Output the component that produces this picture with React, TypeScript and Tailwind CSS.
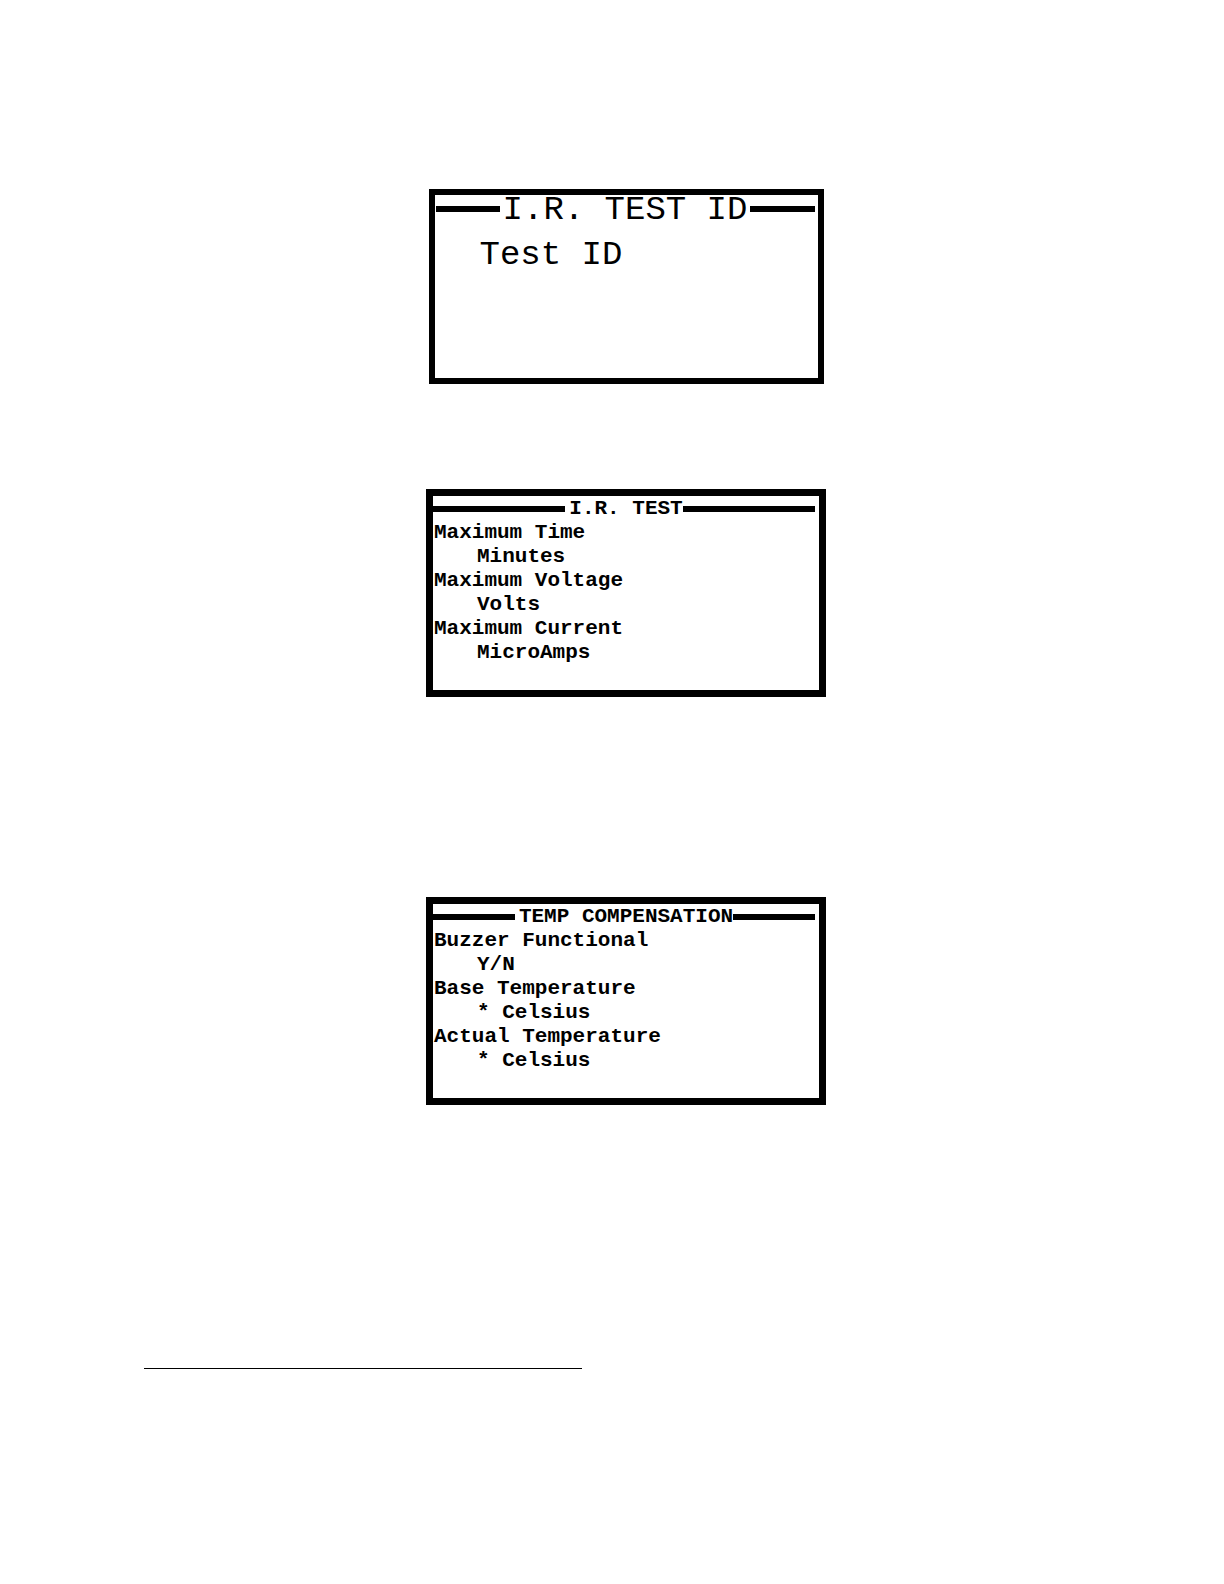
import type { ReactNode } from "react";

interface ScreenProps {
  title: string;
  lines: { text: string; indent?: boolean }[];
}

function TitleRow({ children }: { children: ReactNode }) {
  return (
    <div className="flex items-center">
      <span className="h-[6px] flex-1 bg-black" />
      {children}
      <span className="h-[6px] flex-1 bg-black" />
    </div>
  );
}

function Screen({ title, lines }: ScreenProps) {
  return (
    <section className="w-full max-w-[400px] border-[7px] border-black bg-white pr-1 pb-[25px] text-[21px] leading-[24px] font-bold">
      <TitleRow>
        <h2 className="pt-px pl-1 whitespace-pre">{title}</h2>
      </TitleRow>
      {lines.map((line, i) => (
        <p key={i} className={line.indent ? "pl-11 whitespace-pre" : "pl-px whitespace-pre"}>
          {line.text}
        </p>
      ))}
    </section>
  );
}

export default function App() {
  return (
    <main className="min-h-screen bg-white pt-[189px] pr-[116px] pb-24 pl-36 font-['Liberation_Mono',monospace] text-black">
      <div className="flex flex-col items-center">
        <section className="w-full max-w-[395px] border-[6px] border-black bg-white pr-[3px] pb-[111px] pl-px text-[34px] leading-[24px]">
          <TitleRow>
            <h2 className="px-[3px] pt-[3px] whitespace-pre">I.R. TEST ID</h2>
          </TitleRow>
          <p className="mt-[21px] pl-11 whitespace-pre">Test ID</p>
        </section>

        <div className="mt-[105px] flex w-full justify-center">
          <Screen
            title="I.R. TEST"
            lines={[
              { text: "Maximum Time" },
              { text: "Minutes", indent: true },
              { text: "Maximum Voltage" },
              { text: "Volts", indent: true },
              { text: "Maximum Current" },
              { text: "MicroAmps", indent: true },
            ]}
          />
        </div>

        <div className="mt-[200px] flex w-full justify-center">
          <Screen
            title="TEMP COMPENSATION"
            lines={[
              { text: "Buzzer Functional" },
              { text: "Y/N", indent: true },
              { text: "Base Temperature" },
              { text: "* Celsius", indent: true },
              { text: "Actual Temperature" },
              { text: "* Celsius", indent: true },
            ]}
          />
        </div>
      </div>

      <hr className="mt-[263px] w-full max-w-[438px] border-t border-black" />
    </main>
  );
}
